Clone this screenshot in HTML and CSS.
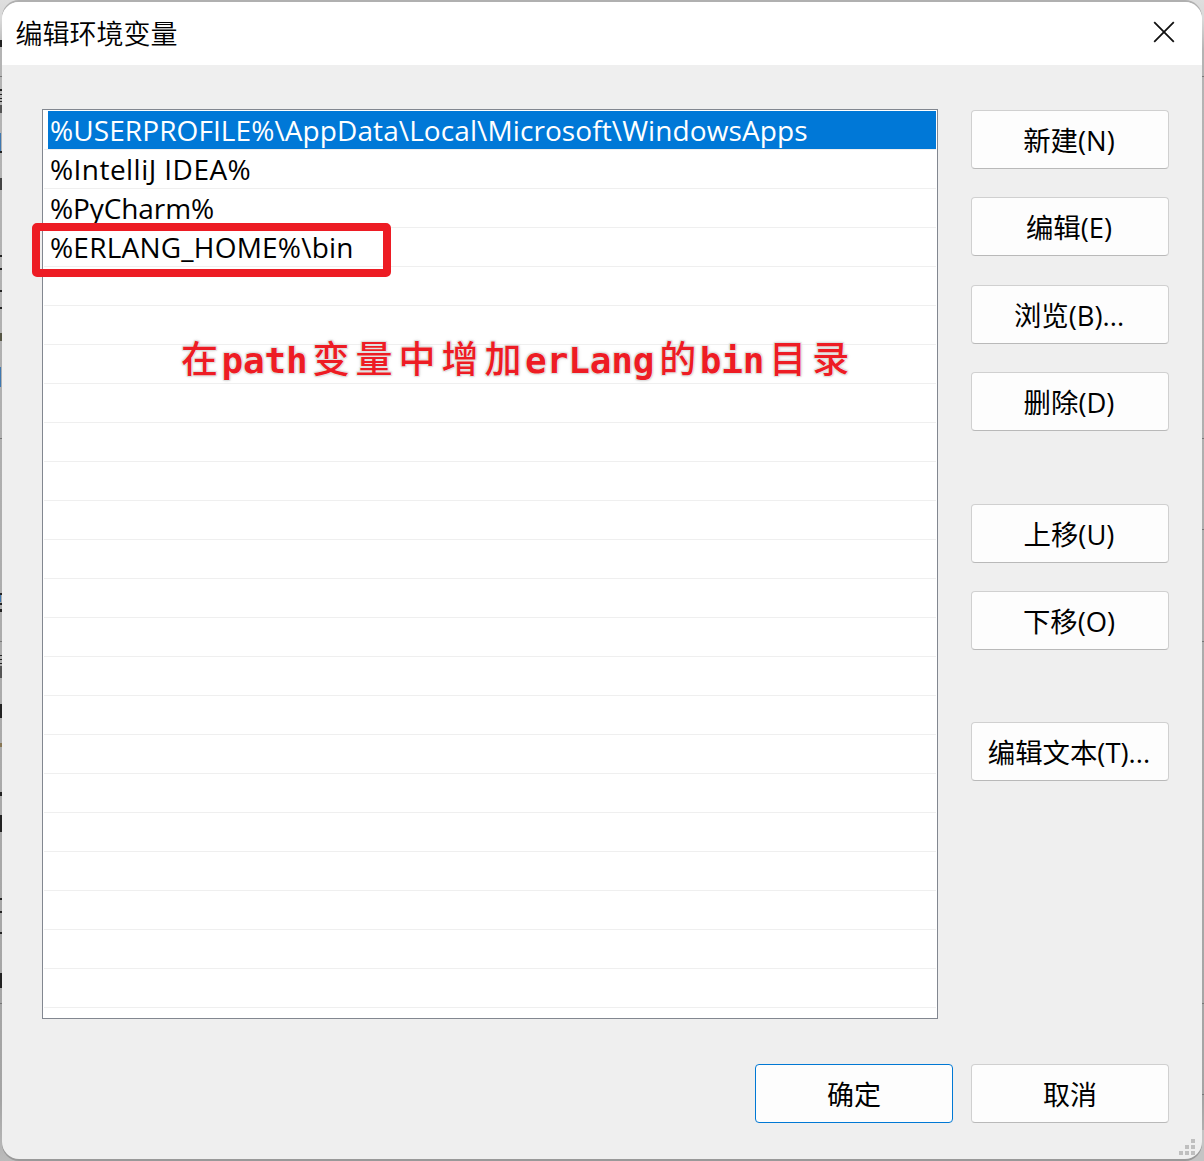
FILE: index.html
```html
<!DOCTYPE html>
<html lang="zh-CN">
<head>
<meta charset="utf-8">
<title>编辑环境变量</title>
<link rel="stylesheet" href="styles.css">
</head>
<body>
<svg class="backdrop" width="1204" height="1161" shape-rendering="crispEdges" aria-hidden="true">
  <g fill="#222">
    <rect x="0" y="40" width="2" height="7"/><rect x="0" y="89" width="2" height="2"/><rect x="0" y="94" width="2" height="1"/><rect x="0" y="98" width="2" height="1"/><rect x="0" y="101" width="2" height="1"/><rect x="0" y="105" width="2" height="8" fill="#555"/>
    <rect x="0" y="151" width="2" height="2"/><rect x="0" y="178" width="2" height="12" fill="#444"/>
    <rect x="0" y="255" width="2" height="2"/><rect x="0" y="268" width="2" height="2"/><rect x="0" y="290" width="2" height="2"/><rect x="0" y="307" width="2" height="2"/><rect x="0" y="333" width="2" height="8" fill="#554"/>
    <rect x="0" y="593" width="2" height="2"/><rect x="0" y="603" width="2" height="2"/><rect x="0" y="609" width="2" height="3"/>
    <rect x="0" y="655" width="2" height="1"/><rect x="0" y="659" width="2" height="1"/><rect x="0" y="663" width="2" height="1"/><rect x="0" y="666" width="2" height="12" fill="#555"/>
    <rect x="0" y="704" width="2" height="14"/><rect x="0" y="743" width="2" height="4" fill="#875"/><rect x="0" y="792" width="2" height="4"/><rect x="0" y="815" width="2" height="17"/>
    <rect x="0" y="898" width="2" height="2"/><rect x="0" y="911" width="2" height="2"/><rect x="0" y="932" width="2" height="2"/><rect x="0" y="973" width="2" height="15"/>
  </g>
  <g fill="#3f78b0"><rect x="0" y="133" width="1" height="18"/><rect x="0" y="367" width="1" height="20"/><rect x="0" y="595" width="1" height="7"/></g>
  <g fill="#777">
    <rect x="0" y="76" width="2" height="1"/><rect x="0" y="438" width="2" height="1"/><rect x="0" y="641" width="2" height="1"/><rect x="0" y="1003" width="2" height="1"/>
    <rect x="1202" y="76" width="2" height="1"/><rect x="1202" y="438" width="2" height="1"/><rect x="1202" y="529" width="2" height="1"/><rect x="1202" y="641" width="2" height="1"/><rect x="1202" y="1003" width="2" height="1"/><rect x="1202" y="1094" width="2" height="1"/>
  </g>
</svg>
<main class="dialog">
  <header class="titlebar">
    <h1 class="title">编辑环境变量</h1>
    <svg class="close" width="22" height="22" viewBox="0 0 22 22" aria-label="关闭"><path d="M1.2 1.2 20.8 20.8M20.8 1.2 1.2 20.8"/></svg>
  </header>
  <div class="content">
    <section class="list">
      <div class="row selected"><span class="r1">%USERPROFILE%\AppData\Local\Microsoft\WindowsApps</span></div>
      <div class="row"><span class="r2">%IntelliJ IDEA%</span></div>
      <div class="row"><span class="r3">%PyCharm%</span></div>
      <div class="row"><span class="r4">%ERLANG_HOME%\bin</span></div>
      <div class="row"></div><div class="row"></div><div class="row"></div><div class="row"></div>
      <div class="row"></div><div class="row"></div><div class="row"></div><div class="row"></div>
      <div class="row"></div><div class="row"></div><div class="row"></div><div class="row"></div>
      <div class="row"></div><div class="row"></div><div class="row"></div><div class="row"></div>
      <div class="row"></div><div class="row"></div><div class="row"></div>
      <div class="highlight"></div>
      <div class="note">在<b>path</b>变量中增加<b>erLang</b>的<b>bin</b>目录</div>
    </section>
    <aside class="actions">
      <button class="btn">新建(N)</button>
      <button class="btn">编辑(E)</button>
      <button class="btn browse">浏览(B)...</button>
      <button class="btn">删除(D)</button>
      <button class="btn move">上移(U)</button>
      <button class="btn">下移(O)</button>
      <button class="btn text">编辑文本(T)...</button>
    </aside>
  </div>
  <footer class="footer">
    <button class="btn primary">确定</button>
    <button class="btn">取消</button>
  </footer>
  <svg class="grip" width="16" height="16" aria-hidden="true"><path d="M12 0h4v4h-4zM6 6h4v4H6zM12 6h4v4h-4zM0 12h4v4H0zM6 12h4v4H6zM12 12h4v4h-4z"/></svg>
</main>
</body>
</html>
```
FILE: styles.css
```css
* { box-sizing: border-box; }
html, body { margin: 0; height: 1161px; overflow: hidden; }
body {
  padding: 2px;
  background: linear-gradient(90deg, transparent 1185px, #c4c4c4 1185px) 0 1130px / 1204px 31px no-repeat,
    linear-gradient(#dedede 0, #d8d8d8 20px, #b4b4b4 50px, #b0b0b0 400px, #a4a4a4 1100px, #bbb 1161px);
  font-family: "Open Sans", "Noto Sans CJK SC", sans-serif;
  color: #000;
}
.backdrop { position: absolute; left: 0; top: 0; }
.dialog {
  position: relative;
  width: 1200px;
  height: 1157px;
  display: flex;
  flex-direction: column;
  background: #efefef;
  border-radius: 17px;
  box-shadow: 0 -2px 0 0 #b0b0b0, 0 2px 0 0 #999;
  overflow: hidden;
}
.titlebar {
  height: 63px;
  flex: none;
  display: flex;
  justify-content: space-between;
  padding: 0 27px 0 13.5px;
  background: #fff;
}
.title {
  margin: 0;
  font: 350 27px/61px "Noto Sans CJK SC", sans-serif;
}
.close { margin-top: 19px; fill: none; stroke: #111; stroke-width: 1.8; }
.content {
  display: flex;
  justify-content: space-between;
  padding: 44px 33px 0 40px;
}
.list {
  position: relative;
  width: 896px;
  height: 910px;
  padding: 1px 1px 0;
  background: #fff;
  border: 1px solid #828790;
}
.row {
  height: 39px;
  padding-left: 4px;
  border-bottom: 1px solid #efefef;
  font-size: 28px;
  line-height: 38px;
  white-space: pre;
}
.row span { display: block; height: 38px; padding-left: 2px; }
.selected span { background: #0078d7; color: #fff; }
.r1 { letter-spacing: .09px; }
.r2 { letter-spacing: .45px; }
.r3 { letter-spacing: -.1px; }
.r4 { letter-spacing: .22px; }
.highlight {
  position: absolute;
  left: -11px;
  top: 113px;
  width: 359px;
  height: 54px;
  border: 8px solid #ed1c24;
  border-radius: 5px;
}
.note {
  position: absolute;
  left: 138px;
  top: 220px;
  color: #ed1c24;
  font: 500 37px/54px "Noto Sans CJK SC", sans-serif;
  letter-spacing: 6px;
  white-space: nowrap;
  text-shadow: 0 0 1px #fff, 1px 1px 1px #ddd, -1px -1px 1px #ddd, 1px -1px 1px #ddd, -1px 1px 1px #ddd, 0 0 4px #ddd;
}
.note b {
  margin: 0 5px 0 -2.5px;
  font-family: "DejaVu Sans Mono", monospace;
  font-size: 36px;
  letter-spacing: -.15px;
}
.actions {
  display: flex;
  flex-direction: column;
  gap: 28px;
  padding-top: 1px;
}
.btn {
  display: block;
  width: 198px;
  height: 59px;
  flex: none;
  padding: 1px 2px 0 0;
  border: 1px solid #d0d0d0;
  border-bottom-color: #b9b9b9;
  border-radius: 4px;
  background: #fdfdfd;
  color: #000;
  font: 27.4px/55px "Open Sans", "Noto Sans CJK SC", sans-serif;
  text-align: center;
  white-space: nowrap;
}
.browse { margin-top: 1px; }
.move { margin-top: 45px; }
.text { margin-top: 44px; }
.footer {
  display: flex;
  justify-content: flex-end;
  gap: 18px;
  padding: 45px 33px 0 0;
}
.footer .btn { padding: 2px 0 0; font-size: 27px; }
.primary { border-color: #0078d4; }
.grip { position: absolute; right: 7px; bottom: 4px; fill: #bfbfbf; }
```
